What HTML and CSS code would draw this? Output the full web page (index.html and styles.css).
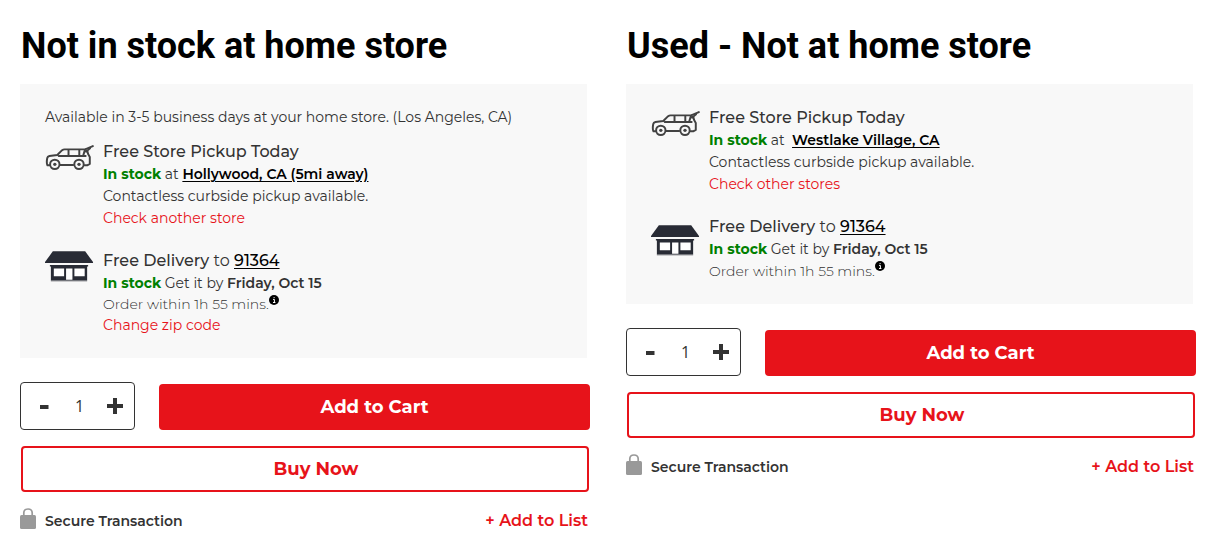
FILE: index.html
```html
<!DOCTYPE html>
<html lang="en">
<head>
<meta charset="utf-8">
<meta name="viewport" content="width=device-width, initial-scale=1">
<title>Product availability</title>
<link rel="stylesheet" href="styles.css">
</head>
<body>
<svg class="sprite" aria-hidden="true">
  <symbol id="car" viewBox="0 0 50 26">
    <g fill="none" stroke="#424242" stroke-width="2" stroke-linecap="round" stroke-linejoin="round">
      <path d="M4.5 20.5H2.5Q1.3 18 2.3 13Q2.6 11.4 4.5 11L12.5 10L17.5 5Q18.5 4.2 20 4.2H41L48.8 0.8M41 4.2Q43.5 5.5 44 9L45.7 12V19L43 20.5H40.5"/>
      <path d="M15.8 20.2H28.8M14 10.9H41.5M24 5V10.5M35 5V10.5M40.5 5.5L39 10.5M42 6.5L46 3"/>
      <circle cx="10" cy="19.5" r="4.8"/><circle cx="34.7" cy="19.5" r="4.8"/>
    </g>
    <circle cx="10" cy="19.5" r="1.7" fill="#424242"/><circle cx="34.7" cy="19.5" r="1.7" fill="#424242"/>
  </symbol>
  <symbol id="house" viewBox="0 0 50 32">
    <path d="M8 0H41L49 11V12H0V11Z" fill="#282b35"/>
    <path d="M5 14H44V15.5H43V30H6V15.5H5Z" fill="#282b35"/>
    <path d="M9 17.5H19.5V25.5H9ZM30 17.5H40.5V25.5H30ZM21.5 17.5H28V29H21.5Z" fill="#fff"/>
    <path d="M6 30.5H43" stroke="#b5b6b9"/>
  </symbol>
  <symbol id="info" viewBox="0 0 10 10">
    <circle cx="5" cy="5" r="5" fill="#000"/>
    <path d="M4 4.4H5.4V7.5M4 7.5H6.4M4.6 2.6H5.6" stroke="#fff" fill="none"/>
  </symbol>
  <symbol id="lock" viewBox="0 0 16 21">
    <path d="M3.8 9V5Q3.8 1 8 1T12.2 5V9" fill="none" stroke="#999" stroke-width="1.7"/>
    <rect y="7" width="16" height="14" rx="1.5" fill="#999"/>
  </symbol>
  <symbol id="minus" viewBox="0 0 16 16"><path d="M4 9H12.5" stroke="#333" stroke-width="4"/></symbol>
  <symbol id="plus" viewBox="0 0 16 16"><path d="M0 8H16M8 0V16" stroke="#333" stroke-width="4"/></symbol>
</svg>

<main class="page">
  <section class="offer">
    <h1 class="heading">Not in stock at home store</h1>
    <div class="panel">
      <p class="notice">Available in 3-5 business days at your home store. (Los Angeles, CA)</p>
      <div class="option">
        <svg class="icon icon-car" aria-hidden="true"><use href="#car"/></svg>
        <div class="details">
          <h2 class="title">Free Store Pickup Today</h2>
          <p><strong class="stock">In stock</strong> at <a class="place" href="#">Hollywood, CA (5mi away)</a></p>
          <p>Contactless curbside pickup available.</p>
          <p><a class="change" href="#">Check another store</a></p>
        </div>
      </div>
      <div class="option">
        <svg class="icon" aria-hidden="true"><use href="#house"/></svg>
        <div class="details">
          <h2 class="title">Free Delivery <span class="to">to</span> <a class="zip" href="#">91364</a></h2>
          <p><strong class="stock">In stock</strong> Get it by <strong>Friday, Oct 15</strong></p>
          <p class="deadline deadline-tight">Order within 1h 55 mins.<svg class="info" role="img" aria-label="More information"><use href="#info"/></svg></p>
          <p><a class="change" href="#">Change zip code</a></p>
        </div>
      </div>
    </div>
    <div class="purchase">
      <div class="quantity">
        <button class="step" type="button" aria-label="Decrease quantity"><svg><use href="#minus"/></svg></button>
        <input class="count" type="text" inputmode="numeric" value="1" aria-label="Quantity">
        <button class="step" type="button" aria-label="Increase quantity"><svg><use href="#plus"/></svg></button>
      </div>
      <button class="button add" type="button">Add to Cart</button>
    </div>
    <button class="button buy" type="button">Buy Now</button>
    <div class="footer">
      <span class="secure"><svg class="lock" aria-hidden="true"><use href="#lock"/></svg>Secure Transaction</span>
      <a class="list" href="#">+ Add to List</a>
    </div>
  </section>

  <section class="offer">
    <h1 class="heading">Used - Not at home store</h1>
    <div class="panel">
      <div class="option">
        <svg class="icon icon-car" aria-hidden="true"><use href="#car"/></svg>
        <div class="details">
          <h2 class="title">Free Store Pickup Today</h2>
          <p><strong class="stock">In stock</strong> at&nbsp; <a class="place" href="#">Westlake Village, CA</a></p>
          <p>Contactless curbside pickup available.</p>
          <p><a class="change" href="#">Check other stores</a></p>
        </div>
      </div>
      <div class="option">
        <svg class="icon icon-low" aria-hidden="true"><use href="#house"/></svg>
        <div class="details">
          <h2 class="title">Free Delivery <span class="to">to</span> <a class="zip" href="#">91364</a></h2>
          <p><strong class="stock">In stock</strong> Get it by <strong>Friday, Oct 15</strong></p>
          <p class="deadline">Order within 1h 55 mins.<svg class="info" role="img" aria-label="More information"><use href="#info"/></svg></p>
        </div>
      </div>
    </div>
    <div class="purchase">
      <div class="quantity">
        <button class="step" type="button" aria-label="Decrease quantity"><svg><use href="#minus"/></svg></button>
        <input class="count" type="text" inputmode="numeric" value="1" aria-label="Quantity">
        <button class="step" type="button" aria-label="Increase quantity"><svg><use href="#plus"/></svg></button>
      </div>
      <button class="button add" type="button">Add to Cart</button>
    </div>
    <button class="button buy" type="button">Buy Now</button>
    <div class="footer">
      <span class="secure"><svg class="lock" aria-hidden="true"><use href="#lock"/></svg>Secure Transaction</span>
      <a class="list" href="#">+ Add to List</a>
    </div>
  </section>
</main>
</body>
</html>
```

FILE: styles.css
```css
* { box-sizing: border-box; }
body {
  margin: 0;
  background: #fff;
  color: #333;
  font-family: Montserrat, Inter, "Open Sans", sans-serif;
  font-size: 14px;
  line-height: 22px;
}
h1, h2, p { margin: 0; }
svg { display: block; }
.sprite { position: absolute; width: 0; height: 0; }
.page {
  display: grid;
  grid-template-columns: 1fr 1fr;
  column-gap: 36px;
  align-items: start;
  padding: 24px 22px 16px 20px;
}
.heading {
  padding-left: 1px;
  color: #000;
  font: 700 36px/44px Roboto, sans-serif;
}
.panel {
  margin: 16px 3px 24px 0;
  padding: 21px 25px 22px;
  background: #f8f8f8;
}
.notice { line-height: 24px; margin-bottom: 10px; }
.option { display: flex; gap: 9px; }
.option + .option { margin-top: 19px; }
.icon { flex: none; width: 49px; height: 32px; margin-top: 3px; }
.icon-car { height: 26px; margin-top: 6px; }
.icon-low { margin-top: 11px; }
.title { padding-top: 2px; font-size: 16px; font-weight: 500; line-height: 22px; }
.to { font-weight: 400; }
strong { font-weight: 600; }
.stock { color: #008000; font-weight: 700; }
.place, .zip { color: #000; text-underline-offset: 2px; }
.place { font-weight: 600; }
.change { color: #e7131a; text-decoration: none; }
.deadline { display: flex; font-weight: 300; }
.deadline-tight { line-height: 20px; }
.info { width: 10px; height: 10px; margin-top: 1px; }
.purchase { display: flex; align-items: flex-end; gap: 24px; }
.quantity {
  display: flex;
  align-items: center;
  justify-content: space-between;
  width: 115px;
  height: 48px;
  padding: 0 11px 0 15px;
  border: 1px solid #333;
  border-radius: 4px;
}
.step { padding: 0; border: 0; background: none; cursor: pointer; }
.step svg { width: 16px; height: 16px; }
.count {
  width: 30px;
  padding: 0;
  border: 0;
  background: none;
  color: #333;
  font: 16px/22px "Open Sans", sans-serif;
  text-align: center;
}
.button {
  height: 46px;
  border: 2px solid #e7131a;
  border-radius: 4px;
  font: inherit;
  font-size: 18px;
  font-weight: 700;
  cursor: pointer;
}
.add { flex: 1; background: #e7131a; color: #fff; }
.buy {
  display: block;
  width: calc(100% - 2px);
  margin: 16px 1px;
  padding-left: 28px;
  background: #fff;
  color: #e7131a;
}
.footer {
  display: flex;
  align-items: center;
  justify-content: space-between;
  padding-right: 2px;
  line-height: 26px;
}
.secure { display: flex; gap: 9px; font-weight: 600; }
.lock { width: 16px; height: 21px; }
.list { color: #e7131a; font-size: 16px; font-weight: 600; text-decoration: none; }
```
